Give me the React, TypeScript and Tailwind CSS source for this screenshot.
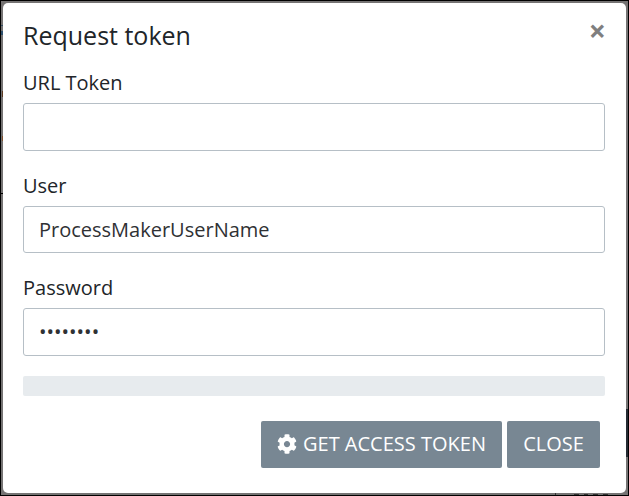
import { FaCog } from 'react-icons/fa';

function Field({ label, type = 'text', value, className }: { label: string; type?: string; value: string; className: string }) {
  return (
    <label className={`flex flex-col ${className}`}>
      <span className="h-[35px] text-[20px] leading-[30px]">{label}</span>
      <input
        type={type}
        defaultValue={value}
        className="min-h-0 w-full flex-1 rounded-[3px] border border-[#b6bfc6] bg-white px-[15px] text-[20px] text-[#2f3134] outline-none"
      />
    </label>
  );
}

export default function App() {
  return (
    <div className="relative h-[496px] w-[629px] overflow-hidden border border-black bg-[#757373] p-[2px] font-['Open_Sans',sans-serif] text-[#212529]">
      <div className="absolute top-[24px] left-0 h-px w-[2px] bg-[#345064]" />
      <div className="absolute top-[30px] left-0 h-1 w-[2px] bg-[#2d4f6c]" />
      <div className="absolute top-[90px] left-px h-[6px] w-px bg-[#5c3a20]" />
      <div className="absolute top-[135px] left-px h-[5px] w-px bg-[#80502c]" />
      <div className="absolute top-[192px] left-0 h-px w-[2px] bg-black" />
      <div className="absolute top-[408px] right-0 h-[48px] w-[2px] bg-[#252b33]" />
      <div className="absolute right-[72px] bottom-0 h-[2px] w-px bg-[#333333]" />
      <div className="absolute right-[20px] bottom-0 flex gap-[5px]">
        <span className="h-px w-[5px] bg-[#333333]" />
        <span className="h-px w-[4px] bg-[#333333]" />
        <span className="h-px w-[5px] bg-[#333333]" />
        <span className="h-px w-[5px] bg-[#333333]" />
      </div>
      <div className="relative flex h-[490px] w-[623px] flex-col rounded-[5px] bg-white pr-[21px] pl-[20px]">
        <header className="flex h-[65px] items-start justify-between pt-[13px]">
          <h1 className="text-[25px] leading-[38px]">Request token</h1>
          <button className="-mr-px text-[30px] leading-[30px] font-bold text-[#7f7f7f]">×</button>
        </header>
        <Field label="URL Token" value="" className="h-[83px]" />
        <Field label="User" value="ProcessMakerUserName" className="mt-5 h-[82px]" />
        <Field label="Password" type="password" value="password" className="mt-5 h-[83px]" />
        <div className="mt-5 h-5 rounded-[2px] bg-[#e7ebee]" />
        <footer className="mt-[25px] flex h-[47px] justify-end gap-[5px] pr-[5px] text-[20px] text-white">
          <button className="flex w-[241px] items-center rounded-[2px] bg-[#788793] pb-[2px] pl-4 whitespace-nowrap">
            <FaCog className="mr-[6px] h-5 w-5" />
            GET ACCESS TOKEN
          </button>
          <button className="w-[93px] rounded-[2px] bg-[#788793] pb-[2px]">CLOSE</button>
        </footer>
      </div>
    </div>
  );
}
